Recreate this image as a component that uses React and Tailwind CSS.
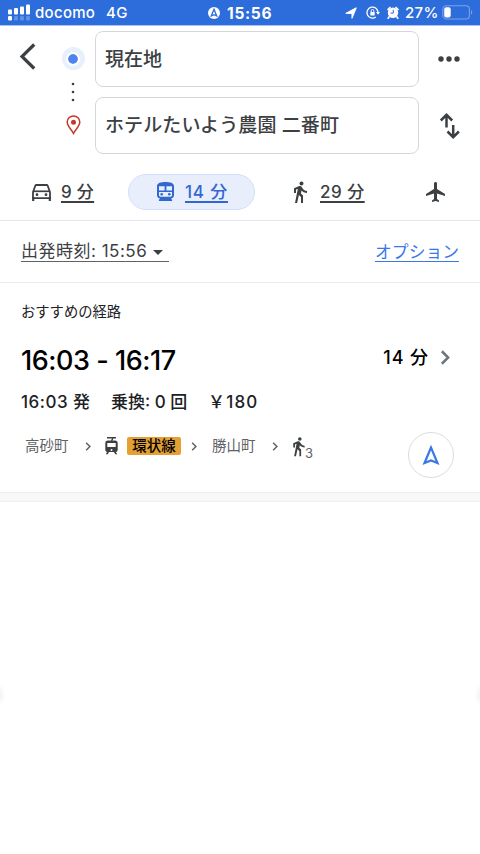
import React from 'react';
import { MdDirectionsWalk, MdFlight } from 'react-icons/md';

const Chevron = ({ className }) => (
  <svg viewBox="0 0 8 12" className={className} fill="none" stroke="currentColor" strokeWidth="2">
    <path d="M1.5 1 6.5 6l-5 5" />
  </svg>
);

const CarIcon = ({ className }) => (
  <svg viewBox="0 0 19 17" className={className} fill="none" stroke="currentColor">
    <path d="M1 8 3.3 1.8Q3.6 1 4.400 1h10.2q.8 0 1.1.8L18 8v6.200H1Z" strokeWidth="1.8" strokeLinejoin="round" />
    <path d="M1.5 7.300h16" strokeWidth="1.7" />
    <path d="M1.200 13v4M17.800 13v4" strokeWidth="2.2" />
    <circle cx="5" cy="10.700" r="1.4" fill="currentColor" stroke="none" />
    <circle cx="14" cy="10.700" r="1.4" fill="currentColor" stroke="none" />
  </svg>
);

const TrainIcon = ({ className }) => (
  <svg viewBox="0 0 17 20" className={className}>
    <path fill="currentColor" fillRule="evenodd" d="M8.500 0C13 0 17 .8 17 4.300v9c0 1.900-1.400 3.200-3.200 3.200l1.300 1.300V19H1.900v-1.200l1.300-1.300C1.400 16.500 0 15.200 0 13.300v-9C0 .8 4 0 8.500 0ZM2 4.200v4.300h5.600V4.200Zm7.400 0v4.300H15V4.200ZM2 10v3.300c0 .8.600 1.400 1.400 1.400h10.200c.8 0 1.400-.6 1.400-1.400V10Z" />
    <circle cx="4.700" cy="12.200" r="1.3" fill="currentColor" />
    <circle cx="12.300" cy="12.200" r="1.3" fill="currentColor" />
  </svg>
);

const TramIcon = ({ className }) => (
  <svg viewBox="0 0 13 18" className={className}>
    <path d="M2 .8h9M6.500 3.800 8 1" fill="none" stroke="currentColor" strokeWidth="1.4" />
    <path fill="currentColor" fillRule="evenodd" d="M3 3.500h7c1.700 0 2.700 1.100 2.700 2.700v6.600c0 1.200-.7 2-1.800 2.200l1.300 2.300h-2l-1.200-2.200H4l-1.200 2.200h-2L2.100 15C1 14.800.3 14 .3 12.800V6.200C.3 4.600 1.300 3.500 3 3.500ZM2.300 6v4h8.400V6ZM6.500 12a1 1 0 1 0 0 2 1 1 0 0 0 0-2Z" />
  </svg>
);

const StatusBar = () => (
  <div className="flex h-[26px] items-center border-b border-[#a9c3f2] bg-[#2d6cdb] pl-2 text-white">
    <svg className="h-[17px] w-[22px] shrink-0" viewBox="0 0 22 17" fill="currentColor">
      <rect x="0" y="5.5" width="4" height="5" rx="1" />
      <rect x="6" y="4" width="4" height="6.5" rx="1" />
      <rect x="12" y="2.5" width="4" height="8" rx="1" />
      <rect x="18" y="0.5" width="4" height="10" rx="1" />
      <rect x="0" y="12" width="4" height="4.5" rx="1.2" />
      <g opacity=".25">
        <rect x="6" y="12" width="4" height="4.5" rx="1.2" />
        <rect x="12" y="12" width="4" height="4.5" rx="1.2" />
        <rect x="18" y="12" width="4" height="4.5" rx="1.2" />
      </g>
    </svg>
    <span className="ml-[5px] w-[71px] pt-[2px] text-[15px] font-medium tracking-[0.3px]">docomo</span>
    <span className="w-[102px] pt-[2px] text-[15px] font-medium tracking-[0.3px]">4G</span>
    <svg className="h-3 w-3 shrink-0" viewBox="0 0 12 12">
      <circle cx="6" cy="6" r="6" fill="#fff" />
      <path d="M6 2.3 8.7 9 6 7.7 3.3 9Z" fill="none" stroke="#2d6cdb" strokeWidth="1.3" />
    </svg>
    <span className="ml-[7px] w-[118px] pt-[2px] text-[15.5px] font-bold tracking-[0.7px]">15:56</span>
    <svg className="h-3 w-3 shrink-0" viewBox="0 0 12 12" fill="currentColor" stroke="currentColor" strokeWidth="1" strokeLinejoin="round">
      <path d="M.8 6.300 11.300.8 7 11.300V6.500Z" />
    </svg>
    <svg className="ml-[9px] h-[13px] w-[14px] shrink-0" viewBox="0 0 14 13" fill="none" stroke="currentColor" strokeWidth="1.3">
      <path d="M9.800 11A5.500 5.500 0 1 1 12 6.500" />
      <path d="M10 6h4l-2 2.800Z" fill="currentColor" stroke="none" />
      <rect x="4.300" y="5.900" width="4.400" height="3.500" rx=".4" fill="currentColor" stroke="none" />
      <path d="M5.200 6V4.800a1.300 1.300 0 0 1 2.600 0V6" strokeWidth="1" />
    </svg>
    <svg className="ml-[7px] h-[13px] w-3 shrink-0" viewBox="0 0 12 13">
      <circle cx="6" cy="6.800" r="5.200" fill="#fff" />
      <path d="M1 3.500 3 1.500M11 3.500 9 1.500M2 11l-.8 1.300M10 11l.8 1.300" stroke="#fff" strokeWidth="1.7" strokeLinecap="round" />
      <path d="M6.300 3.800v3.300H3.600" fill="none" stroke="#2d6cdb" strokeWidth="1" />
    </svg>
    <span className="ml-[6px] w-[37px] pt-[2px] text-[15px] font-medium tracking-[0.3px]">27%</span>
    <svg className="h-[15px] w-[31px] shrink-0" viewBox="0 0 31 15">
      <rect x=".8" y=".8" width="26.600" height="13.200" rx="3.5" fill="none" stroke="#7ba2e9" strokeWidth="1.1" />
      <rect x="2.200" y="2.300" width="6.500" height="10.200" rx="2" fill="#fff" />
      <path d="M29 5.200c1.600.6 1.600 3.800 0 4.400Z" fill="#7ba2e9" />
    </svg>
  </div>
);

const SearchHeader = () => (
  <div className="flex h-32 pt-[5px] text-[#3c4043]">
    <svg className="mt-3 ml-[19px] h-[27px] w-[17px] shrink-0" viewBox="0 0 17 27" fill="none" stroke="currentColor" strokeWidth="3.2">
      <path d="M15.200 1.500 3 13.500l12.200 12" />
    </svg>

    {/* Origin dot, connector and destination pin */}
    <div className="ml-[25px] flex w-6 shrink-0 flex-col items-center pt-4">
      <span className="flex size-[23px] items-center justify-center rounded-full bg-[#e8effd]">
        <span className="size-[14px] rounded-full border-2 border-white bg-[#4f83ee] bg-clip-padding" />
      </span>
      <svg className="mt-[12px] h-[20px] w-[4px]" viewBox="0 0 4 20" fill="#3c4043">
        <circle cx="2" cy="2" r="1.3" />
        <circle cx="2" cy="10" r="1.3" />
        <circle cx="2" cy="18" r="1.3" />
      </svg>
      <svg className="mt-[13px] h-[20px] w-[15px]" viewBox="0 0 15 20">
        <path d="M7.500 1C3.900 1 1.200 3.700 1.200 7.100c0 4.300 4 6.900 6.300 11.400 2.300-4.500 6.300-7.100 6.300-11.400C13.800 3.700 11.100 1 7.500 1Z" fill="none" stroke="#c5392d" strokeWidth="1.5" />
        <circle cx="7.500" cy="7.300" r="2.5" fill="#c5392d" />
      </svg>
    </div>

    <div className="ml-[10px] flex w-[324px] shrink-0 flex-col gap-[10px] text-[19px] font-medium">
      <div className="flex h-14 items-center rounded-lg border border-[#d5d7db] pt-[2px] pl-[9px]">現在地</div>
      <div className="flex h-[57px] items-center rounded-lg border border-[#d5d7db] pt-[2px] pl-[9px] tracking-[0.1px]">ホテルたいよう農園 二番町</div>
    </div>

    <div className="ml-[18px] flex flex-col items-center">
      <svg className="mt-[25px] h-[6px] w-[22px]" viewBox="0 0 22 6" fill="currentColor">
        <circle cx="3" cy="3" r="2.7" />
        <circle cx="11" cy="3" r="2.7" />
        <circle cx="19" cy="3" r="2.7" />
      </svg>
      <svg className="mt-[50px] ml-[2px] h-[28px] w-[22px]" viewBox="0 0 22 28" fill="none" stroke="currentColor" strokeWidth="2.5">
        <path d="M7.500 15.500V3M1.800 8.500l5.700-5.700 5.700 5.700M14.200 13v12.200M8.500 19.500l5.700 5.700 5.700-5.700" />
      </svg>
    </div>
  </div>
);

const TravelModes = () => (
  <div className="flex h-[67px] items-center border-b border-[#e4e6ec] pt-[10px] pl-8 text-[17px] font-medium text-[#3c4043]">
    <div className="flex w-24 items-center gap-[10px]">
      <CarIcon className="h-[17px] w-[19px]" />
      <span className="pt-[2px] tracking-[0.3px] underline decoration-[1.5px] underline-offset-[3px]">9 分</span>
    </div>
    <div className="flex h-9 w-[127px] items-center gap-[11px] rounded-full border border-[#d2e0fa] bg-[#e8eefc] pl-[28px] text-[#3367d0]">
      <TrainIcon className="h-[20px] w-[17px]" />
      <span className="pt-[2px] tracking-[0.8px] underline decoration-[1.5px] underline-offset-[3px]">14 分</span>
    </div>
    <div className="ml-[33px] flex items-center gap-2">
      <MdDirectionsWalk className="size-6" />
      <span className="pt-[2px] tracking-[0.5px] underline decoration-[1.5px] underline-offset-[3px]">29 分</span>
    </div>
    <MdFlight className="ml-[59px] size-6" />
  </div>
);

const DepartureBar = () => (
  <div className="flex h-[62px] items-center justify-between border-b border-[#e8e9ee] pr-[21px] pl-[21px] text-[17px]">
    <div className="flex h-[21px] items-center border-b border-[#5f6368] pt-[2px] text-[#3c4043]">
      <span className="tracking-[0.5px]">出発時刻: 15:56</span>
      <span className="mr-[6px] ml-[6px] border-x-[5px] border-t-[5px] border-x-transparent border-t-[#3c4043]" />
    </div>
    <div className="flex h-[20px] items-center border-b border-[#3b78e7] pt-[3px] text-[16.8px] text-[#3b78e7]">オプション</div>
  </div>
);

const RouteSteps = () => (
  <div className="flex h-6 items-center text-[14.5px] text-[#5f6368]">
    <span className="w-[60px]">高砂町</span>
    <Chevron className="h-[9px] w-[6px]" />
    <TramIcon className="ml-[14px] h-[18px] w-[13px] text-[#3c4043]" />
    <span className="ml-[9px] flex h-[18px] w-[54px] items-center justify-center rounded-[2px] bg-[#e5a035] text-[14.5px] font-medium text-black">環状線</span>
    <Chevron className="ml-[10px] h-[9px] w-[6px]" />
    <span className="ml-[15px] w-[60px]">勝山町</span>
    <Chevron className="h-[9px] w-[6px]" />
    <MdDirectionsWalk className="ml-[10px] size-[21px] text-[#3c4043]" />
    <span className="mt-[15px] -ml-[4px] text-[13px]">3</span>
  </div>
);

const RecommendedRoute = () => (
  <div className="h-[209px] pl-[21px]">
    <div className="pt-[19px] text-[14.3px] leading-5 text-[#202124]">おすすめの経路</div>
    <div className="mt-[21px] flex h-9 items-center justify-between pr-[30px] text-black">
      <span className="text-[27px] font-medium tracking-[-0.45px]">16:03 - 16:17</span>
      <span className="mb-[8px] flex items-center text-[18px] font-medium">
        <span className="tracking-[0.9px]">14 分</span>
        <Chevron className="mt-px ml-[11px] h-[15px] w-[10px] text-[#70757a]" />
      </span>
    </div>
    <div className="mt-[12px] flex h-6 items-center text-[17px] font-medium text-[#202124]">
      <span className="w-[90px] tracking-[0.5px]">16:03 発</span>
      <span className="w-[97px]">乗換: 0 回</span>
      <span className="tracking-[1.2px]">￥180</span>
    </div>
    <div className="flex pt-[17px] pl-1">
      <div className="pt-[2px]"><RouteSteps /></div>
      <button className="mr-[26px] ml-auto flex size-[46px] items-center justify-center rounded-full border border-[#dadce0]">
        <svg className="h-[22px] w-[18px]" viewBox="0 0 18 22" fill="none" stroke="#3b78e7" strokeWidth="2.2">
          <path d="M9 3.500 2.500 19 9 16.500l6.500 2.500Z" />
        </svg>
      </button>
    </div>
  </div>
);

export default function App() {
  return (
    <div className="relative h-[854px] w-[480px] overflow-hidden whitespace-nowrap bg-white font-['Inter','Noto_Sans_CJK_JP',sans-serif]" lang="ja">
      <StatusBar />
      <SearchHeader />
      <TravelModes />
      <DepartureBar />
      <RecommendedRoute />
      <div className="h-[10px] border-y border-[#eeefef] bg-[#f7f8f8]" />
      {/* Soft shadows at the screen edges */}
      <div className="absolute top-[689px] -left-[13px] h-3 w-3 rounded-full shadow-[0_0_8px_rgba(0,0,0,0.2)]" />
      <div className="absolute top-[689px] -right-[13px] h-3 w-3 rounded-full shadow-[0_0_8px_rgba(0,0,0,0.2)]" />
    </div>
  );
}
